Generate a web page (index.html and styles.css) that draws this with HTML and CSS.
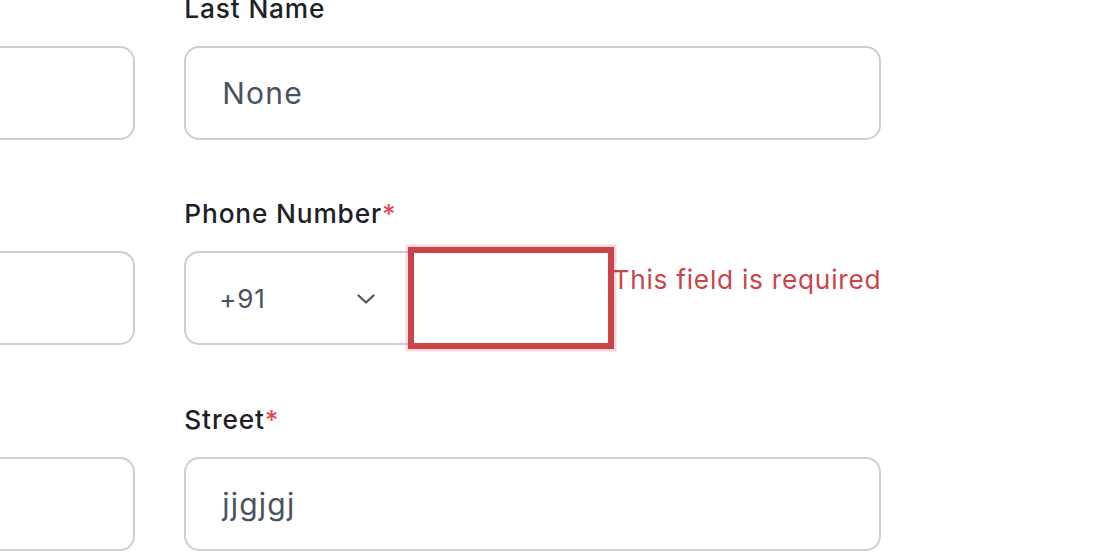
FILE: index.html
```html
<!DOCTYPE html>
<html lang="en">
<head>
<meta charset="utf-8">
<title>Form</title>
<link rel="stylesheet" href="styles.css">
</head>
<body>
<form class="form-grid">
  <div class="field">
    <label class="label">First Name</label>
    <div class="input"></div>
  </div>
  <div class="field">
    <label class="label">Last Name</label>
    <div class="input"><span class="value">None</span></div>
  </div>
  <div class="field">
    <label class="label">Email<span class="req">*</span></label>
    <div class="input"></div>
  </div>
  <div class="field">
    <label class="label">Phone Number<span class="req">*</span></label>
    <div class="phone-row">
      <div class="select">
        <span class="code">+91</span>
        <svg class="chev" width="18" height="10" viewBox="0 0 18 10"><path d="M1.5 1.5 L9 8.5 L16.5 1.5" fill="none" stroke="#4b5563" stroke-width="2.2" stroke-linecap="round" stroke-linejoin="round"/></svg>
      </div>
      <div class="phone-input"></div>
      <span class="error">This field is required</span>
    </div>
  </div>
  <div class="field">
    <label class="label">City<span class="req">*</span></label>
    <div class="input"></div>
  </div>
  <div class="field">
    <label class="label">Street<span class="req">*</span></label>
    <div class="input"><span class="value">jjgjgj</span></div>
  </div>
</form>
</body>
</html>
```
FILE: styles.css
```css
html, body {
  margin: 0;
  padding: 0;
  background: #ffffff;
  font-family: Inter, "Noto Sans", "Liberation Sans", sans-serif;
}

body {
  overflow: hidden;
}

.form-grid {
  display: grid;
  grid-template-columns: 697px 697px;
  column-gap: 49px;
  row-gap: 55.5px;
  margin-top: -10.5px;
  margin-left: -561.7px;
}

.field {
  display: flex;
  flex-direction: column;
}

.label {
  font-size: 26.25px;
  line-height: 37.5px;
  font-weight: 500;
  letter-spacing: 0.85px;
  color: #1d2127;
  margin-bottom: 18.75px;
  white-space: nowrap;
}

.req {
  color: #e5484d;
}

.input {
  box-sizing: border-box;
  height: 93.75px;
  border: 2px solid #c9ced9;
  border-radius: 15px;
  background: #ffffff;
  display: flex;
  align-items: center;
  padding-left: 36px;
}

.value {
  font-size: 30px;
  letter-spacing: 1.2px;
  color: #4b5160;
}

.phone-row {
  display: flex;
  align-items: flex-start;
}

.select {
  box-sizing: border-box;
  width: 228.5px;
  height: 93.75px;
  border: 2px solid #c9ced9;
  border-radius: 15px 0 0 15px;
  background: #ffffff;
  display: flex;
  align-items: center;
  justify-content: space-between;
  padding-left: 33px;
  padding-right: 35px;
}

.code {
  font-size: 26px;
  letter-spacing: 0.8px;
  color: #4b5160;
}

.chev {
  display: block;
  margin-top: 2px;
}

.phone-input {
  box-sizing: border-box;
  width: 199.5px;
  height: 93.75px;
  border: 2px solid #cb444a;
  background: #ffffff;
  box-shadow: 0 0 0 4px #cb444a, 0 0 0 6.5px rgba(230, 130, 135, 0.3);
}

.error {
  margin-left: 2.5px;
  margin-top: 9.4px;
  font-size: 26.25px;
  line-height: 37.5px;
  letter-spacing: 0.75px;
  color: #cb444a;
  white-space: nowrap;
}
```
